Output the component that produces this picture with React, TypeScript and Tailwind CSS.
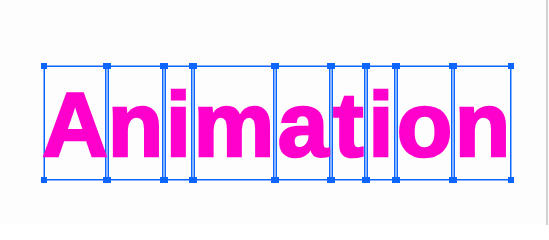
const letters = [
  { ch: "A", w: "w-[62px]" },
  { ch: "n", w: "w-[55px]" },
  { ch: "i", w: "w-[27px]" },
  { ch: "m", w: "w-[80px]" },
  { ch: "a", w: "w-[54px]" },
  { ch: "t", w: "w-[33px]" },
  { ch: "i", w: "w-[28px]" },
  { ch: "o", w: "w-[55px]" },
  { ch: "n", w: "w-[57px]" },
];

// selection handle on a glyph box corner
function Handle({ className }: { className: string }) {
  return <span className={`absolute h-[6px] w-[6px] bg-[#0a66ff] ${className}`} />;
}

function GlyphBox({ ch, w }: { ch: string; w: string }) {
  return (
    <div
      className={`relative box-border h-[114px] ${w} border border-[#0a66ff] shadow-[0_0_0_0.5px_#0a66ff]`}
    >
      <div className="flex justify-center pt-[6px] text-[91px] font-bold leading-[104px] text-[#ff00cc] [-webkit-text-stroke:2.5px_#ff00cc] [font-family:'Liberation_Sans',Arial,sans-serif]">
        {ch}
      </div>
      <Handle className="-left-[4px] -top-[4px]" />
      <Handle className="-right-[4px] -top-[4px]" />
      <Handle className="-bottom-[4px] -left-[4px]" />
      <Handle className="-bottom-[4px] -right-[4px]" />
    </div>
  );
}

export default function App() {
  return (
    <div className="flex h-[225px] w-[549px] bg-[#fdfdfd]">
      <div className="flex-1 pl-[44px] pt-[66px]">
        <div className="flex gap-[2px]">
          {letters.map((l, i) => (
            <GlyphBox key={i} ch={l.ch} w={l.w} />
          ))}
        </div>
      </div>
      <div className="w-[2px] bg-[#d2d2d2]" />
      <div className="w-[1px]" />
    </div>
  );
}
